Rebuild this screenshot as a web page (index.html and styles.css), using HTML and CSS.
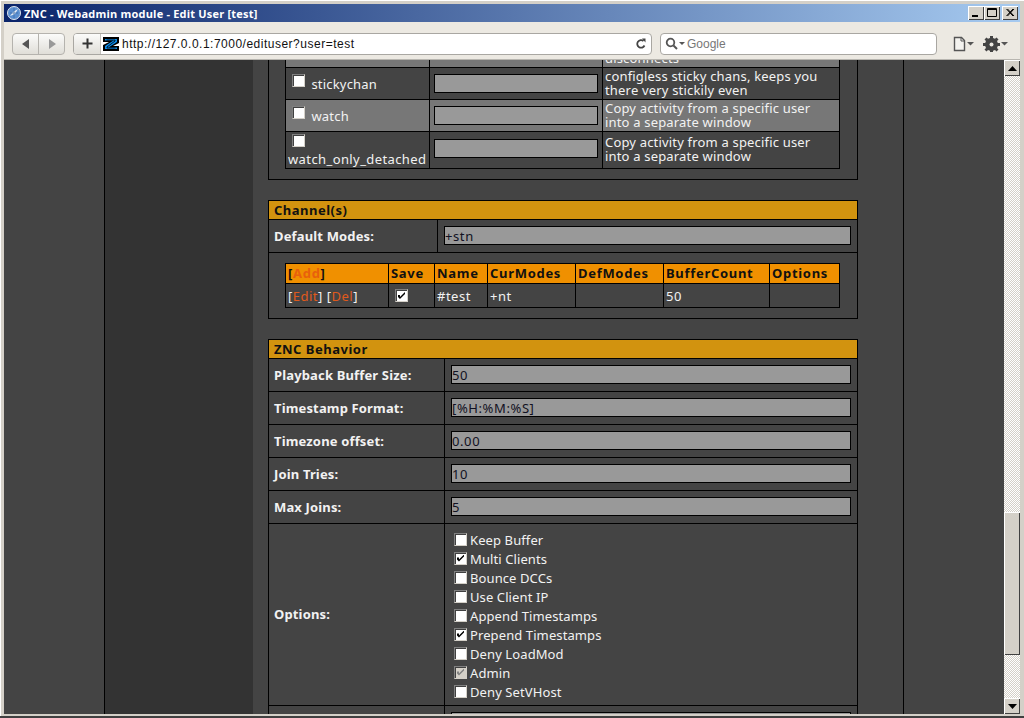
FILE: index.html
```html
<!DOCTYPE html>
<html lang="en">
<head>
   <meta charset="UTF-8">
   <title>ZNC - Webadmin module - Edit User [test]</title>
   <link rel="stylesheet" href="styles.css">
</head>
<body>
<div class="window">
   <!-- Title bar -->
   <div class="titlebar">
      <svg class="globe" width="14" height="14" viewBox="0 0 14 14"><circle cx="7" cy="7" r="6.5" fill="#5b8fd0" stroke="#dfe6ee"/><path d="M3 10 L8 8 L11 3 L6 6 Z" fill="#e8eef5"/><path d="M3 7h8M7 2v10" stroke="#2f5f9f" stroke-width=".6"/></svg>
      <span class="title-text">ZNC - Webadmin module - Edit User [test]</span>
      <div class="caption-btns">
         <span class="cap-btn"><svg width="16" height="14" viewBox="0 0 16 14"><rect x="4" y="9" width="6" height="2" fill="#000"/></svg></span>
         <span class="cap-btn"><svg width="16" height="14" viewBox="0 0 16 14"><path d="M3.500 2.500h9v8h-9z M3 3.500h10" fill="none" stroke="#000"/></svg></span>
         <span class="cap-btn close"><svg width="16" height="14" viewBox="0 0 16 14"><path d="M4.500 3l6.500 7M5.500 3l6.500 7M11 3l-6.500 7M12 3l-6.500 7" stroke="#000" fill="none"/></svg></span>
      </div>
   </div>

   <!-- Browser toolbar -->
   <div class="toolbar">
      <div class="nav-group">
         <span class="nav-btn"><svg width="12" height="12" viewBox="0 0 12 12"><path d="M9 1v10L2 6z" fill="#555"/></svg></span>
         <span class="nav-btn"><svg width="12" height="12" viewBox="0 0 12 12"><path d="M3 1v10l7-5z" fill="#999"/></svg></span>
      </div>
      <div class="urlbar">
         <span class="plus"><svg width="13" height="13" viewBox="0 0 13 13"><path d="M6.500 1.500v10M1.500 6.500h10" stroke="#333" stroke-width="2"/></svg></span>
         <svg class="favicon" width="16" height="16" viewBox="0 0 16 16"><path d="M0 1h16v6l-6 3h6v5H0V9l6-3H0z" fill="#000"/><path d="M2 3h12v3L5.500 11.500H14V13H2v-3L10.500 4.500H2z" fill="#0a8ae8"/><path d="M3.500 4h8.500v1L4 11v1h8.500" fill="none" stroke="#000" stroke-width=".8"/></svg>
         <span class="url-text">http://127.0.0.1:7000/edituser?user=test</span>
         <svg class="reload" width="12" height="12" viewBox="0 0 12 12"><path d="M9.500 7.500A3.800 3.800 0 1 1 8.500 3" fill="none" stroke="#444" stroke-width="1.800"/><path d="M7 .5h3.500V4.500z" fill="#444"/></svg>
      </div>
      <div class="searchbar">
         <svg width="22" height="13" viewBox="0 0 22 13"><circle cx="5.500" cy="5.500" r="3.800" fill="none" stroke="#555" stroke-width="1.800"/><path d="M8.500 8.500l3.500 3.500" stroke="#555" stroke-width="2"/><path d="M14 5h6l-3 3z" fill="#555"/></svg>
         <span class="search-text">Google</span>
      </div>
      <div class="tool-icons">
         <svg width="22" height="16" viewBox="0 0 22 16"><path d="M1.500 1.500h7l3 3v10h-10z" fill="#f4f3ef" stroke="#555" stroke-width="1.400"/><path d="M8 1.500v3.500h3.500" fill="none" stroke="#555"/><path d="M14 6h7l-3.500 3.500z" fill="#555"/></svg>
         <svg width="26" height="16" viewBox="0 0 26 16"><path d="M6 0h3v2l2 .8 1.500-1.300 2 2L13 5l.8 2H16v3h-2.200l-.8 2 1.500 1.500-2 2L11 14l-2 .8V16H6v-1.200L4 14l-1.500 1.500-2-2L2 12l-.8-2H-1V7h2.200L2 5 .5 3.500l2-2L4 2.800 6 2z" transform="translate(1 0)" fill="#444"/><circle cx="8.500" cy="8.500" r="2" fill="#ece9e2"/><path d="M18 6h7l-3.500 3.500z" fill="#555"/></svg>
      </div>
   </div>

   <!-- Page area and scrollbar -->
   <div class="viewport">
      <div class="page">
         <div class="side-gap"></div>
         <div class="sidebar"></div>
         <div class="main">
            <!-- Modules -->
            <div class="section section-first">
               <table class="list mods">
                  <tr class="alt">
                     <td class="mod-name"><input type="checkbox"> <span class="mod-label">stripcontrols</span></td>
                     <td class="mod-args"><input class="field" type="text"></td>
                     <td class="mod-desc">Strips colors on client<br>disconnects</td>
                  </tr>
                  <tr>
                     <td class="mod-name"><input type="checkbox"> <span class="mod-label">stickychan</span></td>
                     <td class="mod-args"><input class="field" type="text"></td>
                     <td class="mod-desc">configless sticky chans, keeps you<br>there very stickily even</td>
                  </tr>
                  <tr class="alt">
                     <td class="mod-name"><input type="checkbox"> <span class="mod-label">watch</span></td>
                     <td class="mod-args"><input class="field" type="text"></td>
                     <td class="mod-desc">Copy activity from a specific user<br>into a separate window</td>
                  </tr>
                  <tr class="last-mod">
                     <td class="mod-name"><input type="checkbox"><br><span class="mod-wide">watch_only_detached</span></td>
                     <td class="mod-args"><input class="field" type="text"></td>
                     <td class="mod-desc">Copy activity from a specific user<br>into a separate window</td>
                  </tr>
               </table>
            </div>

            <!-- Channels -->
            <div class="section">
               <div class="section-title">Channel(s)</div>
               <table class="form form-narrow">
                  <tr>
                     <td class="label">Default Modes:</td>
                     <td class="value"><input class="field" type="text" value="+stn"></td>
                  </tr>
               </table>
               <table class="list chans">
                  <tr>
                     <th class="c-act">[<a class="add">Add</a>]</th>
                     <th class="c-save">Save</th>
                     <th class="c-name">Name</th>
                     <th class="c-cur">CurModes</th>
                     <th class="c-def">DefModes</th>
                     <th class="c-buf">BufferCount</th>
                     <th>Options</th>
                  </tr>
                  <tr>
                     <td>[<a>Edit</a>] [<a>Del</a>]</td>
                     <td class="save-cell"><input type="checkbox" checked></td>
                     <td>#test</td>
                     <td>+nt</td>
                     <td></td>
                     <td>50</td>
                     <td></td>
                  </tr>
               </table>
            </div>

            <!-- ZNC behavior -->
            <div class="section">
               <div class="section-title">ZNC Behavior</div>
               <table class="form form-wide">
                  <tr><td class="label">Playback Buffer Size:</td><td class="value"><input class="field" type="text" value="50"></td></tr>
                  <tr><td class="label">Timestamp Format:</td><td class="value"><input class="field" type="text" value="[%H:%M:%S]"></td></tr>
                  <tr><td class="label">Timezone offset:</td><td class="value"><input class="field" type="text" value="0.00"></td></tr>
                  <tr><td class="label">Join Tries:</td><td class="value"><input class="field" type="text" value="10"></td></tr>
                  <tr><td class="label">Max Joins:</td><td class="value"><input class="field" type="text" value="5"></td></tr>
                  <tr>
                     <td class="label">Options:</td>
                     <td class="value options">
                        <label class="opt"><input type="checkbox">Keep Buffer</label>
                        <label class="opt"><input type="checkbox" checked>Multi Clients</label>
                        <label class="opt"><input type="checkbox">Bounce DCCs</label>
                        <label class="opt"><input type="checkbox">Use Client IP</label>
                        <label class="opt"><input type="checkbox">Append Timestamps</label>
                        <label class="opt"><input type="checkbox" checked>Prepend Timestamps</label>
                        <label class="opt"><input type="checkbox">Deny LoadMod</label>
                        <label class="opt"><input type="checkbox" checked disabled>Admin</label>
                        <label class="opt"><input type="checkbox">Deny SetVHost</label>
                     </td>
                  </tr>
                  <tr><td class="label"></td><td class="value"><input class="field" type="text"></td></tr>
               </table>
            </div>
         </div>
      </div>

      <div class="scrollbar">
         <span class="sb-btn"><svg width="9" height="5" viewBox="0 0 9 5"><path d="M4.500 0L9 5H0z" fill="#000"/></svg></span>
         <div class="sb-track"><div class="sb-thumb"></div></div>
         <span class="sb-btn"><svg width="9" height="5" viewBox="0 0 9 5"><path d="M0 0h9L4.500 5z" fill="#000"/></svg></span>
      </div>
   </div>
</div>
</body>
</html>
```

FILE: styles.css
```css
/* whole browser window */
html, body {
    margin: 0;
    height: 100%;
    overflow: hidden;
}

.window {
    display: flex;
    flex-direction: column;
    width: 1024px;
    height: 718px;
    box-sizing: border-box;
    padding: 4px 4px 2px;
    background-color: #d4d0c8;
    border-bottom: 2px solid #404040;
    box-shadow: inset 1px 1px 0 #fff;
}

/* title bar */
.titlebar {
    display: flex;
    align-items: center;
    flex: 0 0 18px;
    padding: 0 2px 0 3px;
    background: linear-gradient(to right, #0a246a, #a6caf0);
    color: #fff;
}

.globe {
    margin-right: 3px;
}

.title-text {
    font-family: "Open Sans", sans-serif;
    font-size: 11px;
    font-weight: bold;
    letter-spacing: .2px;
}

.caption-btns {
    display: flex;
    margin-left: auto;
}

.cap-btn {
    display: block;
    width: 16px;
    height: 14px;
    background-color: #d4d0c8;
    box-shadow: inset 1px 1px 0 #fff, inset -1px -1px 0 #404040;
}

.cap-btn.close {
    margin-left: 2px;
}

/* toolbar */
.toolbar {
    display: flex;
    align-items: center;
    flex: 0 0 38px;
    background-color: #ece9e2;
    border-bottom: 1px solid #b8b6b0;
    box-sizing: border-box;
    padding: 6px 0 0 8px;
}

.nav-group {
    display: flex;
    height: 22px;
    box-sizing: border-box;
    border: 1px solid #b5b3ae;
    border-radius: 4px;
    background: linear-gradient(#fbfbfa, #e0ded8);
}

.nav-btn {
    display: flex;
    align-items: center;
    justify-content: center;
    width: 25px;
}

.nav-btn + .nav-btn {
    border-left: 1px solid #b5b3ae;
}

.urlbar {
    display: flex;
    align-items: center;
    width: 579px;
    height: 22px;
    box-sizing: border-box;
    margin-left: 8px;
    border: 1px solid #a9a7a2;
    border-radius: 4px;
    background-color: #fff;
}

.plus {
    display: flex;
    align-items: center;
    justify-content: center;
    width: 26px;
    height: 100%;
    border-right: 1px solid #c4c2bd;
    background: linear-gradient(#fbfbfa, #e0ded8);
    border-radius: 3px 0 0 3px;
}

.favicon {
    margin: 0 3px 0 2px;
}

.url-text {
    font-family: "Liberation Sans", sans-serif;
    font-size: 12px;
    letter-spacing: .5px;
    color: #111;
}

.reload {
    margin-left: auto;
    margin-right: 4px;
}

.searchbar {
    display: flex;
    align-items: center;
    width: 277px;
    height: 22px;
    box-sizing: border-box;
    margin-left: 8px;
    padding-left: 4px;
    border: 1px solid #a9a7a2;
    border-radius: 4px;
    background-color: #fff;
}

.search-text {
    font-family: "Liberation Sans", sans-serif;
    font-size: 12px;
    color: #777;
}

.tool-icons {
    display: flex;
    align-items: center;
    gap: 8px;
    margin-left: 16px;
}

/* viewport */
.viewport {
    display: flex;
    flex: 1;
    min-height: 0;
}

.page {
    display: flex;
    flex: 1;
    min-width: 0;
    overflow: hidden;
    background-color: #444;
    font-family: "Noto Sans", sans-serif;
    font-size: 13px;
    color: #f2f2f2;
}

.side-gap {
    flex: 0 0 100px;
}

.sidebar {
    flex: 0 0 148px;
    background-color: #333;
    border-left: 1px solid #000;
}

.main {
    flex: 0 0 635px;
    padding-left: 15px;
    border-right: 1px solid #000;
}

/* sections */
.section {
    width: 588px;
    margin-bottom: 20px;
    border: 1px solid #000;
}

.section-first {
    margin-top: -25px;
    border-top: none;
    padding-bottom: 10px;
}

.section-title {
    height: 18px;
    padding-left: 5px;
    line-height: 18px;
    font-weight: bold;
    letter-spacing: .5px;
    background-color: #d2930f;
    color: #111;
    border-bottom: 1px solid #000;
}

table {
    border-collapse: collapse;
    table-layout: fixed;
}

/* module and channel lists */
.list {
    width: 555px;
    margin-left: 16px;
}

.list td, .list th {
    border: 1px solid #000;
    padding: 0 2px;
}

.mods {
    border-top: none;
}

.mods tr:first-child td {
    border-top: none;
}

.mods tr {
    height: 32px;
}

.mods .last-mod {
    height: 37px;
}

.mods .alt {
    background-color: #777;
}

.mod-name {
    width: 139px;
    white-space: nowrap;
    line-height: 17px;
}

.mods .mod-name input {
    margin-left: 4px;
}

.mod-label {
    margin-left: 3px;
    letter-spacing: .2px;
    vertical-align: -2px;
}

.mod-wide {
    letter-spacing: .4px;
    vertical-align: -2px;
}

.last-mod .mod-name input {
    vertical-align: top;
    margin-top: 2px;
}

.last-mod .mod-args, .last-mod .mod-desc {
    padding-bottom: 2px;
}

.mods td.mod-args {
    width: 164px;
    padding-left: 4px;
    padding-right: 4px;
}

.mod-desc {
    line-height: 14px;
    letter-spacing: .18px;
    white-space: nowrap;
}

.chans {
    margin-top: 10px;
    margin-bottom: 10px;
}

.chans th {
    height: 18px;
    padding-bottom: 1px;
    text-align: left;
    letter-spacing: .7px;
    background-color: #f09000;
    color: #111;
}

.chans td {
    height: 23px;
    letter-spacing: .5px;
}

.c-act { width: 98px; }
.c-save { width: 41px; }
.c-name { width: 48px; }
.c-cur { width: 83px; }
.c-def { width: 83px; }
.c-buf { width: 101px; }

.chans td.save-cell {
    padding-left: 6px;
    line-height: 0;
}

a {
    color: #e05a1c;
}

a.add {
    color: #e8600c;
}

/* label / value forms */
.form {
    width: 588px;
}

.form tr {
    height: 33px;
    border-bottom: 1px solid #000;
}

.form-wide tr:first-child {
    height: 32px;
}

.form tr:last-child {
    border-bottom: none;
}

.label {
    width: 170px;
    padding: 0 0 0 5px;
    font-weight: bold;
    letter-spacing: .15px;
    border-right: 1px solid #000;
}

.form-narrow {
    border-bottom: 1px solid #000;
}

.form-narrow .label {
    width: 163px;
}

.value {
    padding: 0 6px;
}

.field {
    display: block;
    width: 100%;
    height: 19px;
    box-sizing: border-box;
    margin: 0;
    padding: 0;
    background-color: #999;
    border: 1px solid #000;
    font-family: "Noto Sans", sans-serif;
    font-size: 13px;
    letter-spacing: .6px;
    color: #112;
}

/* checkboxes */
input[type=checkbox] {
    appearance: none;
    position: relative;
    box-sizing: border-box;
    width: 13px;
    height: 13px;
    margin: 0;
    background-color: #fff;
    border: 1px solid;
    border-color: #808080 #d4d0c8 #d4d0c8 #808080;
    box-shadow: inset 1px 1px 0 #404040;
}

input[type=checkbox]:checked::before {
    content: "";
    position: absolute;
    left: 2px;
    top: 2px;
    width: 7px;
    height: 7px;
    background-color: #000;
    clip-path: polygon(0 43%, 28% 43%, 28% 71%, 100% 0, 100% 28%, 28% 100%, 0 71%);
}

input[type=checkbox]:disabled {
    background-color: #d4d0c8;
}

input[type=checkbox]:disabled::before {
    background-color: #808080;
}

.options {
    padding: 7px 0 3px 9px;
}

.opt {
    display: flex;
    align-items: flex-start;
    height: 19px;
    line-height: 19px;
    letter-spacing: .1px;
}

.opt input {
    margin: 2px 3px 0 0;
}

/* scrollbar */
.scrollbar {
    display: flex;
    flex-direction: column;
    flex: 0 0 16px;
}

.sb-btn {
    display: flex;
    align-items: center;
    justify-content: center;
    flex: 0 0 16px;
    background-color: #d4d0c8;
    box-shadow: inset 1px 1px 0 #fff, inset -1px -1px 0 #404040;
}

.sb-track {
    flex: 1;
    background-color: #eee;
    background-image: repeating-conic-gradient(#d4d0c8 0 25%, #fff 0 50%);
    background-size: 2px 2px;
}

.sb-thumb {
    height: 143px;
    margin-top: 436px;
    background-color: #d4d0c8;
    box-shadow: inset 1px 1px 0 #fff, inset -1px -1px 0 #404040;
}
```
